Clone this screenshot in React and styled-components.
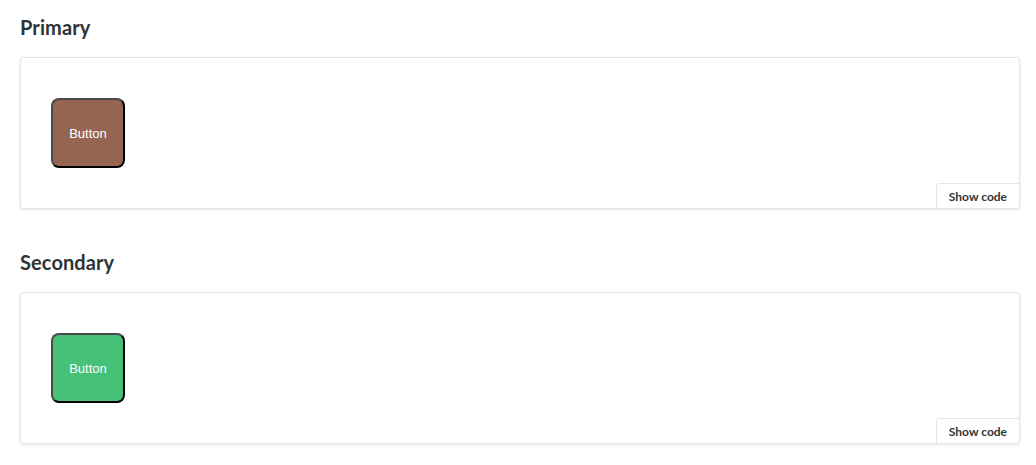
import React from 'react'
import styled, { createGlobalStyle } from 'styled-components'

const GlobalStyle = createGlobalStyle`
  body {
    margin: 0;
    background: #ffffff;
    font-family: "Lato", "Open Sans", sans-serif;
    color: #333333;
  }
`;

const Page = styled.div`
  padding: 0 16px 0 20px;
  display: flex;
  flex-direction: column;
`;

const Heading = styled.h3`
  margin: 13px 0 16px;
  font-size: 20px;
  line-height: 28px;
  font-weight: 700;
  color: #2e3438;
  letter-spacing: 0.1px;
`;

const Canvas = styled.div`
  position: relative;
  border: 1px solid rgba(0, 0, 0, 0.1);
  border-radius: 4px;
  box-shadow: rgba(0, 0, 0, 0.1) 0 1px 3px 0;
  background: #ffffff;
  padding: 40px 30px;
  display: flex;
  align-items: center;
  margin-bottom: 26px;
`;

const DemoButton = styled.button`
  width: 74px;
  height: 70px;
  border-radius: 8px;
  border: 2px solid #000;
  border-top-color: #4a4a4a;
  border-left-color: #4a4a4a;
  background: ${p => p.$bg};
  color: #ffffff;
  font-family: "Liberation Sans", Arial, sans-serif;
  font-size: 13px;
  padding: 0;
  cursor: pointer;
`;

const ShowCode = styled.button`
  position: absolute;
  right: -1px;
  bottom: -1px;
  height: 26px;
  padding: 0 12px;
  background: #ffffff;
  border: 1px solid rgba(0, 0, 0, 0.1);
  border-radius: 4px 0 4px 0;
  font-family: "Lato", "Open Sans", sans-serif;
  font-size: 12px;
  font-weight: 700;
  color: #333333;
  cursor: pointer;
`;

const stories = [
  { name: 'Primary', color: '#956552' },
  { name: 'Secondary', color: '#45c178' },
];

const App = () => {
  return (
    <>
      <GlobalStyle />
      <Page>
        {stories.map(s => (
          <React.Fragment key={s.name}>
            <Heading>{s.name}</Heading>
            <Canvas>
              <DemoButton $bg={s.color}>Button</DemoButton>
              <ShowCode>Show code</ShowCode>
            </Canvas>
          </React.Fragment>
        ))}
      </Page>
    </>
  )
}

export default App
